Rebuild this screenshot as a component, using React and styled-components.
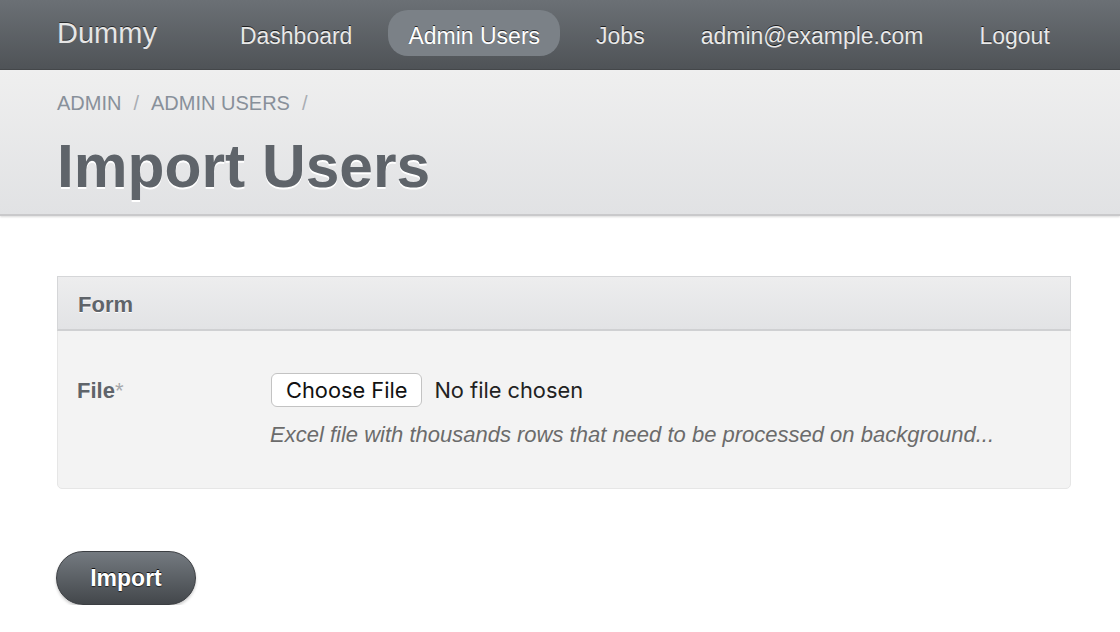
import styled, { createGlobalStyle } from "styled-components";

const GlobalStyle = createGlobalStyle`
  * { box-sizing: border-box; }
  body {
    margin: 0;
    background: #ffffff;
    font-family: "Liberation Sans", Arial, sans-serif;
  }
`;

const navItems = ["Dashboard", "Admin Users", "Jobs", "admin@example.com", "Logout"];

const App = () => {
  return (
    <>
      <GlobalStyle />
      <NavBar>
        <Brand>Dummy</Brand>
        <NavList>
          {navItems.map((item) => (
            <NavItem key={item} $active={item === "Admin Users"}>
              {item}
            </NavItem>
          ))}
        </NavList>
      </NavBar>
      <Header>
        <Breadcrumbs>
          <Crumb>ADMIN</Crumb>
          <Slash>/</Slash>
          <Crumb>ADMIN USERS</Crumb>
          <Slash>/</Slash>
        </Breadcrumbs>
        <Title>Import Users</Title>
      </Header>
      <Main>
        <Panel>
          <PanelHeading>Form</PanelHeading>
          <PanelBody>
            <FieldLabel>
              File<Required>*</Required>
            </FieldLabel>
            <FieldControl>
              <FileRow>
                <FileButton>
                  Choose File
                  <HiddenInput type="file" />
                </FileButton>
                <FileName>No file chosen</FileName>
              </FileRow>
              <Hint>Excel file with thousands rows that need to be processed on background...</Hint>
            </FieldControl>
          </PanelBody>
        </Panel>
        <SubmitButton type="button">Import</SubmitButton>
      </Main>
    </>
  );
};

export default App;

const NavBar = styled.nav`
  height: 70px;
  display: flex;
  align-items: center;
  padding: 0 0 0 57px;
  background: linear-gradient(#6b7075, #4f5357);
  border-bottom: 1px solid #45484b;
`;

const Brand = styled.div`
  font-size: 29px;
  color: #e6e6e6;
  text-shadow: 0 -1px 0 rgba(0, 0, 0, 0.6);
  margin-right: 63px;
  margin-top: -2px;
`;

const NavList = styled.ul`
  display: flex;
  align-items: center;
  gap: 16px;
  margin: 0;
  padding: 0;
  list-style: none;
`;

const NavItem = styled.li`
  font-size: 23px;
  height: 46px;
  display: flex;
  align-items: center;
  padding: 8px 20px 0;
  border-radius: 20px;
  color: ${(p) => (p.$active ? "#ffffff" : "#e9e9e9")};
  background: ${(p) => (p.$active ? "#7b8187" : "transparent")};
  text-shadow: 0 -1px 0 rgba(0, 0, 0, 0.7);
  margin-top: -4px;
`;

const Header = styled.header`
  height: 146px;
  padding: 22px 57px 0;
  background: linear-gradient(#efefef, #e1e2e4);
  border-bottom: 2px solid #c9c9cb;
  box-shadow: 0 1px 2px rgba(0, 0, 0, 0.15);
`;

const Breadcrumbs = styled.div`
  display: flex;
  align-items: center;
  gap: 12px;
  font-size: 20px;
  color: #88909a;
`;

const Crumb = styled.span``;

const Slash = styled.span`
  color: #a9adb3;
`;

const Title = styled.h1`
  margin: 18px 0 0;
  font-size: 60.5px;
  font-weight: 700;
  color: #5f646a;
  text-shadow: 0 2px 0 #ffffff;
  line-height: 1.1;
`;

const Main = styled.main`
  padding: 60px 49px 0 57px;
`;

const Panel = styled.section`
  background: #f3f3f3;
  border: 1px solid #e6e6e6;
  border-radius: 5px;
  margin-bottom: 62px;
`;

const PanelHeading = styled.div`
  height: 55px;
  display: flex;
  align-items: center;
  padding: 4px 20px 0;
  margin: -1px -1px 0;
  background: linear-gradient(#ededee, #e2e3e5);
  border: 1px solid #d5d6d8;
  border-bottom: 2px solid #cfd0d2;
  font-size: 22px;
  font-weight: 700;
  color: #5f646a;
  text-shadow: 0 1px 0 #ffffff;
`;

const PanelBody = styled.div`
  display: grid;
  grid-template-columns: 195px 1fr;
  padding: 42px 19px 40px;
`;

const FieldLabel = styled.label`
  font-size: 22px;
  font-weight: 700;
  color: #5f646a;
  padding-top: 5px;
`;

const Required = styled.span`
  font-weight: 400;
  color: #a7a9ac;
`;

const FieldControl = styled.div`
  display: flex;
  flex-direction: column;
  gap: 15px;
`;

const FileRow = styled.div`
  display: flex;
  align-items: center;
  gap: 12px;
  font-family: "Inter", "Liberation Sans", sans-serif;
  font-size: 21.8px;
`;

const FileButton = styled.label`
  position: relative;
  height: 34px;
  padding: 0 14px;
  display: flex;
  align-items: center;
  background: #ffffff;
  border: 1px solid #c3c3c3;
  border-radius: 6px;
  color: #111111;
  margin-left: -1px;
`;

const HiddenInput = styled.input`
  position: absolute;
  inset: 0;
  opacity: 0;
  width: 100%;
`;

const FileName = styled.span`
  color: #222222;
`;

const Hint = styled.p`
  margin: 0;
  font-size: 22px;
  font-style: italic;
  color: #6b6b6b;
  margin-left: -2px;
`;

const SubmitButton = styled.button`
  width: 140px;
  height: 54px;
  border-radius: 27px;
  border: 1px solid #3c3f43;
  background: linear-gradient(#747a80, #43474b);
  box-shadow: 0 2px 3px rgba(0, 0, 0, 0.2);
  color: #ffffff;
  font-family: "Liberation Sans", Arial, sans-serif;
  font-size: 23px;
  font-weight: 700;
  text-shadow: 0 -1px 0 #111111, 0 1px 1px rgba(0, 0, 0, 0.6);
  margin-left: -1px;
  cursor: pointer;
`;
